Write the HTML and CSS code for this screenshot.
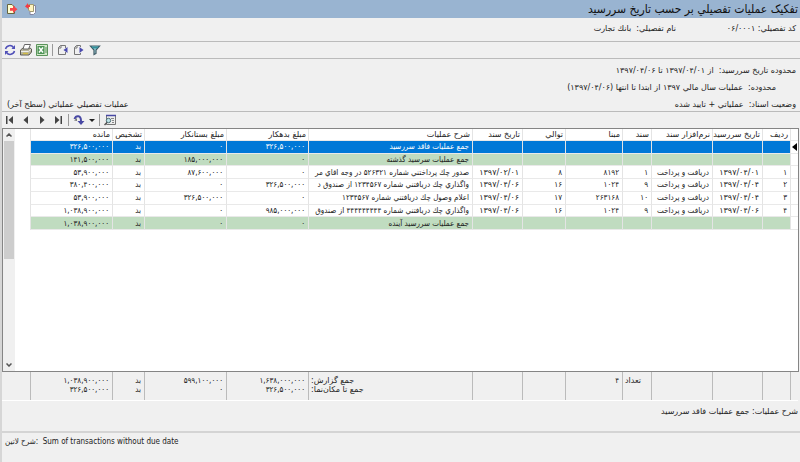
FILE: index.html
```html
<!DOCTYPE html>
<html lang="fa" dir="rtl">
<head>
<meta charset="utf-8">
<title>تفکیک عملیات تفصیلي بر حسب تاریخ سررسید</title>
<link rel="stylesheet" href="styles.css">
</head>
<body>
<header class="titlebar">
  <h1>تفکیک عملیات تفصیلي بر حسب تاریخ سررسید</h1>
  <div class="title-actions">
    <button type="button" aria-label="خروج"><svg width="12" height="12" viewBox="0 0 12 12"><path d="M1.500 1.500H6L8.500 4V10.500H1.500Z" fill="#ffffd0" stroke="#67643f"/><path d="M4 5H7V2.500L11.500 6.300 7 10V7.700H4Z" fill="#f8474b"/></svg></button>
    <button type="button" aria-label="بازگشت"><svg width="12" height="12" viewBox="0 0 12 12"><path d="M5 2.500H10.500V9.500L8.500 11.500H5Z" fill="#fff" stroke="#8585a0"/><path d="M3.500 1.500H8.500V8.500H5L3.500 7Z" fill="#fff4c0" stroke="#a09a70"/><path d="M0 3.500 3 0V2H5V4H3.500V6Z" fill="#f33b43"/></svg></button>
  </div>
</header>
<section class="account">
  <span class="code">کد تفصیلي: ۰۶/۰۰۰۱</span>
  <span>نام تفصیلي:&nbsp; بانك تجارت</span>
</section>
<nav class="toolbar" aria-label="ابزار">
  <button type="button" aria-label="بازخوانی"><svg width="12" height="12" viewBox="0 0 12 12"><g fill="none" stroke="#5050b8" stroke-width="1.500"><path d="M1.500 5A4.500 4.500 0 0 1 9.500 3.500M10.500 7A4.500 4.500 0 0 1 2.500 8.500"/></g><path d="M11 1V5H7.500ZM1 11V7H4.500Z" fill="#5050b8"/></svg></button>
  <button type="button" aria-label="چاپ"><svg width="12" height="12" viewBox="0 0 12 12"><path d="M.5 6 3 4H10L11.500 5V8L9 11H.5Z" fill="#b9b69d" stroke="#5c5b54"/><path d="M4.500 .5H10.500L8.500 5H3Z" fill="#fff" stroke="#666"/><path d="M1 7.500H8.500L11 5.500" fill="none" stroke="#eee"/><path d="M3 9.500H8" stroke="#d3bd48" stroke-width="1.500"/></svg></button>
  <button type="button" aria-label="اکسل"><svg width="12" height="12" viewBox="0 0 12 12"><path d="M.5.5H11.500V11.500H.5Z" fill="#d5e8cd" stroke="#5b945b"/><path d="M1.500 2H8.500V10H1.500Z" fill="#4c9455"/><path d="M3 3.500 7 8.500M7 3.500 3 8.500" stroke="#fff" stroke-width="1.500"/><path d="M9 4H11M9 6H11M9 8H11" stroke="#579458"/></svg></button>
  <span class="sep"></span>
  <button type="button" aria-label="صفحه قبل"><svg width="12" height="12" viewBox="0 0 12 12"><path d="M8.500 4V1.500H3.500L1.500 3.500V10.500H8.500V8M4 1.500V4H1.500" fill="none" stroke="#777"/><path d="M10.500 3V9L6.500 6Z" fill="#4c4caf"/></svg></button>
  <button type="button" aria-label="صفحه بعد"><svg width="12" height="12" viewBox="0 0 12 12"><path d="M7.500 3V1.500H3.500L1.500 3.500V10.500H7.500V9M4 1.500V4H1.500" fill="none" stroke="#777"/><path d="M6.500 3V9L10.500 6Z" fill="#4c4caf"/></svg></button>
  <button type="button" aria-label="فیلتر"><svg width="12" height="12" viewBox="0 0 12 12"><path d="M1.500 2H10.500L7 6V9.500L5 10.500V6Z" fill="#a5dbe1" stroke="#405a65" stroke-width="1.200"/><path d="M2 2.500H10L8 4.500H4Z" fill="#34929c"/></svg></button>
</nav>
<section class="conditions">
  <p>محدوده تاریخ سررسید:&nbsp; از ۱۳۹۷/۰۴/۰۱ تا ۱۳۹۷/۰۴/۰۶</p>
  <p class="range">محدوده:&nbsp; عملیات سال مالي ۱۳۹۷ از ابتدا تا انتها (۱۳۹۷/۰۴/۰۶)</p>
  <p class="status"><span>وضعیت اسناد:&nbsp; عملیاتي + تایید شده</span><span>عملیات تفصیلي عملیاتي (سطح آخر)</span></p>
</section>
<nav class="records" aria-label="پیمایش">
  <button type="button" aria-label="اولین"><svg width="12" height="12" viewBox="0 0 12 12"><path d="M2 2H3.500V10H2ZM9 2V10L4.500 6Z" fill="#444"/></svg></button>
  <button type="button" aria-label="قبلی"><svg width="12" height="12" viewBox="0 0 12 12"><path d="M8 2V10L3.500 6Z" fill="#444"/></svg></button>
  <button type="button" aria-label="بعدی"><svg width="12" height="12" viewBox="0 0 12 12"><path d="M4 2V10L8.500 6Z" fill="#444"/></svg></button>
  <button type="button" aria-label="آخرین"><svg width="12" height="12" viewBox="0 0 12 12"><path d="M8.500 2H10V10H8.500ZM3 2V10L7.500 6Z" fill="#444"/></svg></button>
  <span class="sep"></span>
  <button type="button" aria-label="پرش"><svg width="12" height="12" viewBox="0 0 12 12"><path d="M1.500 5C3 1 8 1 8 7" fill="none" stroke="#4949a4" stroke-width="2"/><path d="M4.500 7H11.500L8 11Z" fill="#4949a4"/><path d="M1 6.500 4 4V7Z" fill="#777"/></svg></button>
  <button type="button" aria-label="گزینه‌ها"><svg width="6" height="12" viewBox="0 0 6 12"><path d="M0 5H6L3 8Z" fill="#222"/></svg></button>
  <span class="sep"></span>
  <button type="button" aria-label="نمایش"><svg width="12" height="12" viewBox="0 0 12 12"><path d="M2.500 1.500H11.500V10.500H2.500Z" fill="#eee" stroke="#777"/><path d="M2 1.500H12" stroke="#4949a4" stroke-width="1.500"/><path d="M7 4.500H10M8 6.500H10M8 8.500H10" stroke="#888"/><circle cx="4.500" cy="6.500" r="2.200" fill="#bee4e8" stroke="#4d6e75"/><path d="M3 8.500.5 11" stroke="#555" stroke-width="1.500"/></svg></button>
</nav>
<main class="grid">
  <table class="data">
    <colgroup><col class="mark"><col class="num"><col class="date"><col class="app"><col class="doc"><col class="base"><col class="seq"><col class="date"><col><col class="money"><col class="money"><col class="side"><col class="money"></colgroup>
    <thead><tr><th></th><th>ردیف</th><th>تاریخ سررسید</th><th>نرم‌افزار سند</th><th>سند</th><th>مبنا</th><th>توالي</th><th>تاریخ سند</th><th>شرح عملیات</th><th>مبلغ بدهکار</th><th>مبلغ بستانکار</th><th>تشخیص</th><th>مانده</th></tr></thead>
    <tbody>
      <tr class="current"><td class="pointer"><svg width="5" height="8" viewBox="0 0 5 8"><path d="M5 0V8L0 4Z"/></svg></td><td></td><td></td><td></td><td></td><td></td><td></td><td></td><td>جمع عملیات فاقد سررسید</td><td>۳۲۶,۵۰۰,۰۰۰</td><td>۰</td><td>بد</td><td>۳۲۶,۵۰۰,۰۰۰</td></tr>
      <tr class="sum"><td></td><td></td><td></td><td></td><td></td><td></td><td></td><td></td><td>جمع عملیات سرسید گذشته</td><td>۰</td><td>۱۸۵,۰۰۰,۰۰۰</td><td>بد</td><td>۱۴۱,۵۰۰,۰۰۰</td></tr>
      <tr><td></td><td>۱</td><td class="day">۱۳۹۷/۰۴/۰۱</td><td>دریافت و پرداخت</td><td>۱</td><td>۸۱۹۲</td><td>۸</td><td class="day">۱۳۹۷/۰۲/۰۱</td><td>صدور چك پرداختني شماره ۵۲۶۳۲۱ در وجه اقاي مر</td><td>۰</td><td>۸۷,۶۰۰,۰۰۰</td><td>بد</td><td>۵۳,۹۰۰,۰۰۰</td></tr>
      <tr><td></td><td>۲</td><td class="day">۱۳۹۷/۰۴/۰۴</td><td>دریافت و پرداخت</td><td>۹</td><td>۱۰۲۴</td><td>۱۶</td><td class="day">۱۳۹۷/۰۴/۰۶</td><td>واگذاري چك دریافتني شماره ۱۲۳۴۵۶۷ از صندوق د</td><td>۳۲۶,۵۰۰,۰۰۰</td><td>۰</td><td>بد</td><td>۳۸۰,۴۰۰,۰۰۰</td></tr>
      <tr><td></td><td>۳</td><td class="day">۱۳۹۷/۰۴/۰۴</td><td>دریافت و پرداخت</td><td>۱۰</td><td>۲۶۳۱۶۸</td><td>۱۷</td><td class="day">۱۳۹۷/۰۴/۰۶</td><td>اعلام وصول چك دریافتني شماره ۱۲۳۴۵۶۷</td><td>۰</td><td>۳۲۶,۵۰۰,۰۰۰</td><td>بد</td><td>۵۳,۹۰۰,۰۰۰</td></tr>
      <tr><td></td><td>۴</td><td class="day">۱۳۹۷/۰۴/۰۶</td><td>دریافت و پرداخت</td><td>۹</td><td>۱۰۲۴</td><td>۱۶</td><td class="day">۱۳۹۷/۰۴/۰۶</td><td>واگذاري چك دریافتني شماره ۴۴۴۴۴۴۴۴۴ از صندوق</td><td>۹۸۵,۰۰۰,۰۰۰</td><td>۰</td><td>بد</td><td>۱,۰۳۸,۹۰۰,۰۰۰</td></tr>
      <tr class="sum"><td></td><td></td><td></td><td></td><td></td><td></td><td></td><td></td><td>جمع عملیات سررسید آینده</td><td>۰</td><td>۰</td><td>بد</td><td>۱,۰۳۸,۹۰۰,۰۰۰</td></tr>
    </tbody>
  </table>
  <div class="scrollbar">
    <button type="button" aria-label="بالا"><svg width="6" height="4" viewBox="0 0 6 4"><path d="M.5 3.500 3 1 5.500 3.500" fill="none" stroke="#555" stroke-width="1.500"/></svg></button>
    <div class="track"><div class="thumb"></div></div>
    <button type="button" aria-label="پایین"><svg width="6" height="4" viewBox="0 0 6 4"><path d="M.5.5 3 3 5.500.5" fill="none" stroke="#555" stroke-width="1.500"/></svg></button>
  </div>
</main>
<section class="totals">
  <table>
    <colgroup><col class="mark"><col class="num"><col class="date"><col class="app"><col class="doc"><col class="base"><col class="seq"><col class="date"><col><col class="money"><col class="money"><col class="side"><col class="money"></colgroup>
    <tbody><tr><td></td><td></td><td></td><td></td><td class="label">تعداد</td><td>۴</td><td></td><td></td><td class="label">جمع گزارش:<br>جمع تا مکان‌نما:</td><td>۱,۶۳۸,۰۰۰,۰۰۰<br>۳۲۶,۵۰۰,۰۰۰</td><td>۵۹۹,۱۰۰,۰۰۰<br>۰</td><td>بد<br>بد</td><td>۱,۰۳۸,۹۰۰,۰۰۰<br>۳۲۶,۵۰۰,۰۰۰</td></tr></tbody>
  </table>
</section>
<section class="description">شرح عملیات: جمع عملیات فاقد سررسید</section>
<footer class="latin" dir="ltr"><span>شرح لاتین</span>:&nbsp; Sum of transactions without due date</footer>
</body>
</html>
```
FILE: styles.css
```css
* { box-sizing: border-box; }
body {
  margin: 0;
  min-height: 100vh;
  display: flex;
  flex-direction: column;
  border-left: 2px solid #d6d6d6;
  background: #f0f0f0;
  color: #222;
  font: 8px/12px "DejaVu Sans", sans-serif;
}
button {
  display: flex;
  align-items: center;
  justify-content: center;
  padding: 0;
  border: 0;
  background: none;
}
svg { display: block; }
h1, p { margin: 0; }
.titlebar {
  display: flex;
  justify-content: space-between;
  align-items: center;
  height: 18px;
  padding: 0 2px 0 4px;
  background: #99b4d1;
}
h1 { font: 12px/16px "DejaVu Sans Condensed", "DejaVu Sans", sans-serif; color: #111; }
.title-actions { display: flex; flex-direction: row-reverse; gap: 7px; }
.account {
  display: flex;
  height: 24px;
  padding: 5px 4px 0;
  border-bottom: 1px solid #bbb;
}
.code { width: 120px; }
.toolbar, .records {
  display: flex;
  direction: ltr;
  align-items: center;
  gap: 4px;
  height: 17px;
  padding: 0 2px;
  border-bottom: 1px solid #bbb;
}
.sep { width: 1px; height: 12px; background: #999; }
.conditions { padding: 6px 4px 0 5px; border-bottom: 1px solid #bbb; height: 53px; }
.conditions p { height: 17px; }
.conditions .range { padding-right: 20px; }
.status { display: flex; justify-content: space-between; }
.records { border: 0; height: 16px; }
.grid {
  display: flex;
  justify-content: space-between;
  flex: 1;
  margin-right: 1px;
  border: 1px solid #858585;
  background: #fff;
}
table {
  flex: 1;
  width: 100%;
  table-layout: fixed;
  border-collapse: separate;
  border-spacing: 0;
}
.data { height: 101px; margin-left: 15px; }
.mark { width: 8px; }
.num { width: 28px; }
.date { width: 50px; }
.app { width: 61px; }
.doc { width: 29px; }
.base { width: 57px; }
.seq { width: 43px; }
.money { width: 82px; }
.side { width: 32px; }
th, td {
  padding: 0 3px;
  overflow: hidden;
  white-space: nowrap;
  text-align: right;
  font-weight: 400;
  line-height: 11px;
}
th { padding: 0 2px; }
td, .latin { font-family: "DejaVu Sans Condensed", "DejaVu Sans", sans-serif; }
td.day, td.label { font-family: "DejaVu Sans", sans-serif; }
.data th, .data td { border-left: 1px solid #e4e4e4; border-bottom: 1px solid #e9e9e9; }
.current td { background: #0078d7; color: #fff; }
.sum td { background: #c0dcc0; }
.data td:first-child { background: #fff; }
.data .pointer { padding: 0 1px; color: #000; }
.scrollbar { display: flex; flex-direction: column; width: 12px; background: #f0f0f0; }
.scrollbar button { height: 12px; }
.track { flex: 1; }
.thumb { height: 54%; margin: 0 1px; background: #cdcdcd; }
.totals { display: flex; height: 29px; margin-right: 2px; border-bottom: 1px solid #fff; }
.totals table { height: 28px; margin-left: 28px; }
.totals td { vertical-align: top; padding-top: 4px; line-height: 9px; border-left: 1px solid #bbb; }
.totals .label { text-align: left; padding-left: 2px; }
.description { height: 32px; padding: 5px 2px; border-bottom: 2px solid #d4d4d4; }
.latin { height: 29px; padding: 3px; text-align: left; }
```
